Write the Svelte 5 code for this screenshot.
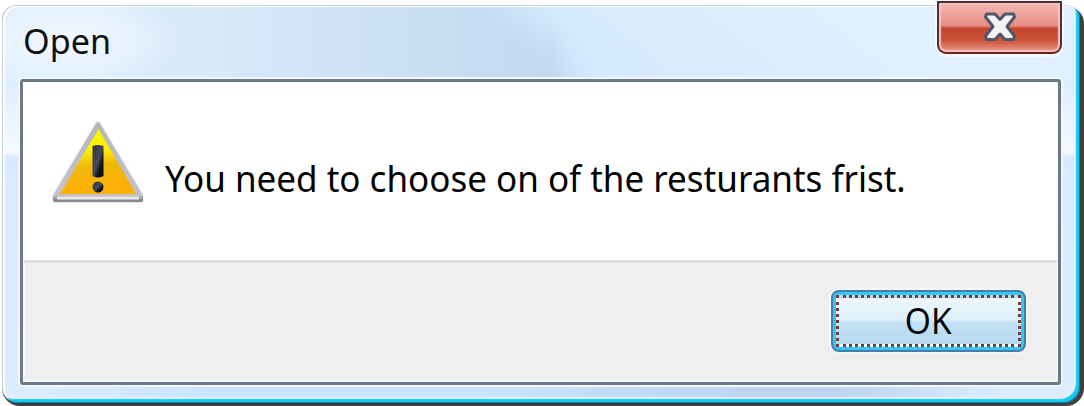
<script>
  const title = 'Open';
  const message = 'You need to choose on of the resturants frist.';
</script>

<div class="window">
  <div class="shadow"></div>
  <div class="frame">
    <header>
      <h1>{title}</h1>
      <button class="close" aria-label="Close">
        <svg width="34" height="30" viewBox="0 0 34 30">
          <path d="M3.500 2H12L17 7.500L22 2H30.500L31.500 5L24 14.500L31.500 24L30.500 27.500H22L17 22L12 27.500H3.500L2.500 24L10 14.500L2.500 5Z" fill="#f4f4f4" stroke="#505767" stroke-width="3" stroke-linejoin="round" />
        </svg>
      </button>
    </header>
    <main>
      <section>
        <svg class="warning" width="94" height="86" viewBox="0 0 94 86">
          <defs>
            <linearGradient id="gold" x1="0" y1="0" x2=".12" y2="1">
              <stop offset="0" stop-color="#fff500" />
              <stop offset=".38" stop-color="#faee04" />
              <stop offset=".6" stop-color="#efb90c" />
              <stop offset="1" stop-color="#ffae05" />
            </linearGradient>
            <linearGradient id="mark" x1="0" y1="0" x2="1" y2="1">
              <stop offset="0" stop-color="#30323a" />
              <stop offset=".5" stop-color="#454a5a" />
              <stop offset=".7" stop-color="#10131d" />
              <stop offset="1" stop-color="#080a10" />
            </linearGradient>
            <linearGradient id="rim" x1="0" y1="0" x2="0" y2="1">
              <stop offset="0" stop-color="#b5b6be" />
              <stop offset=".94" stop-color="#c3c4cb" />
              <stop offset="1" stop-color="#85878e" />
            </linearGradient>
          </defs>
          <path d="M47 4L90 76V80H4V76Z" fill="url(#rim)" stroke="#ededf0" stroke-width="6" stroke-linejoin="round" />
          <path d="M47 4L90 76V80H4V76Z" fill="url(#rim)" stroke="url(#rim)" stroke-width="4" stroke-linejoin="round" />
          <path d="M6 78H88" stroke="#e8e8eb" stroke-width="3" />
          <path d="M47.500 9L85 74H9Z" fill="url(#gold)" />
          <path d="M41.500 26Q47 24 52.500 26V56Q47 59 41.500 56Z" fill="url(#mark)" />
          <circle cx="47" cy="67" r="5.500" fill="url(#mark)" />
        </svg>
        <p>{message}</p>
      </section>
      <footer>
        <button class="ok"><span><b>OK</b></span></button>
      </footer>
    </main>
  </div>
</div>

<style>
  :global(body) {
    margin: 0;
    background: #fff;
    overflow: hidden;
  }
  .window {
    position: relative;
    box-sizing: border-box;
    width: 1084px;
    height: 406px;
    padding: 5px 4px 3px 2px;
    background: #fff;
  }
  .shadow {
    position: absolute;
    inset: 7px 0 0 2px;
    border-radius: 12px 16px 18px 18px;
    background: #403f43;
  }
  .frame {
    position: relative;
    box-sizing: border-box;
    height: 398px;
    padding: 0 19px 18px 18px;
    border-radius: 14px 14px 16px 16px;
    background:
      radial-gradient(ellipse 110px 50px at 70px 35px, #f4f9ff, #f4f9ff00),
      linear-gradient(38deg, #d8eaff00 48%, #d6eaff 55%, #dff0ff 80%) 0 0 / 100% 78px no-repeat,
      linear-gradient(90deg, #deefff 0, #d7e8f8 20%, #c9def3 40%, #c2d8ef 51%, #d3e9ff 55%, #def0ff 90%) 0 0 / 100% 78px no-repeat,
      linear-gradient(90deg, #dcecff 3%, #cae4ff 19%, #cae4ff 45%, #bdd5ee 68%, #bdd5ee 78%, #dcecff 93%) 0 100% / 100% 18px no-repeat,
      linear-gradient(#dceeff 78px, #f5faff 148px, #d8eaff 151px, #dcecff);
    box-shadow:
      inset -1px -1px 0 #167d98,
      inset 1px 1px 0 #c9ced5,
      inset 3px 2px 1px #fff,
      inset -4px -4px 1px #10cdf0,
      inset -6px -6px 2px #e9f0ff;
  }
  header {
    display: flex;
    justify-content: space-between;
    align-items: flex-start;
    height: 74px;
  }
  h1 {
    margin: 9px 0 0 3px;
    font: 400 35px/54px 'Noto Sans', sans-serif;
    color: #101014;
    transform: scaleX(.975);
    transform-origin: 0 0;
  }
  button {
    box-sizing: border-box;
    padding: 0;
  }
  .close {
    display: flex;
    justify-content: center;
    width: 125px;
    height: 53px;
    margin: -4px -1px 0 0;
    padding-top: 9px;
    border: 2px solid #552d33;
    border-bottom-color: #69241f;
    border-radius: 0 0 9px 9px;
    background: linear-gradient(#f5b8b2, #e58f86 46%, #c5452f 52%, #cb5038 75%, #e99b89);
    box-shadow: inset 0 0 1px 2px #f3c1bc, 0 1px 1px 2px #f2f8ff;
  }
  main {
    box-sizing: border-box;
    height: 306px;
    border: 3px solid #6f7a86;
    border-radius: 3px;
    background: #fff;
    box-shadow: 0 0 1px 2px #f2f8ff;
  }
  section {
    display: flex;
    height: 178px;
  }
  .warning {
    margin: 38px 0 0 28px;
  }
  p {
    margin: 69px 0 0 20px;
    font: 400 37px/54px 'Noto Sans', sans-serif;
    white-space: nowrap;
    color: #000;
    transform: scaleX(.946);
    transform-origin: 0 0;
  }
  footer {
    display: flex;
    justify-content: flex-end;
    align-items: flex-start;
    box-sizing: border-box;
    height: 122px;
    padding: 27px 30px 0 0;
    border: 2px solid #f8f8f8;
    border-top: 3px solid #dfdfdf;
    background: #efefef;
  }
  .ok {
    width: 195px;
    height: 62px;
    padding: 3px;
    border: 2px solid #407fae;
    border-radius: 8px;
    background: #38c5f0;
    box-shadow: 0 0 1px 2px #f7f5f4;
  }
  .ok span {
    display: block;
    box-sizing: border-box;
    height: 52px;
    border: 3px dotted #7d3a35;
    background: linear-gradient(#edf7fd, #dceffa 48%, #c4e2f4 52%, #b5d9ef);
    font: 400 36px/46px 'Noto Sans', sans-serif;
    color: #08080c;
  }
  .ok b {
    display: inline-block;
    font-weight: 400;
    transform: scaleX(.93);
  }
</style>
